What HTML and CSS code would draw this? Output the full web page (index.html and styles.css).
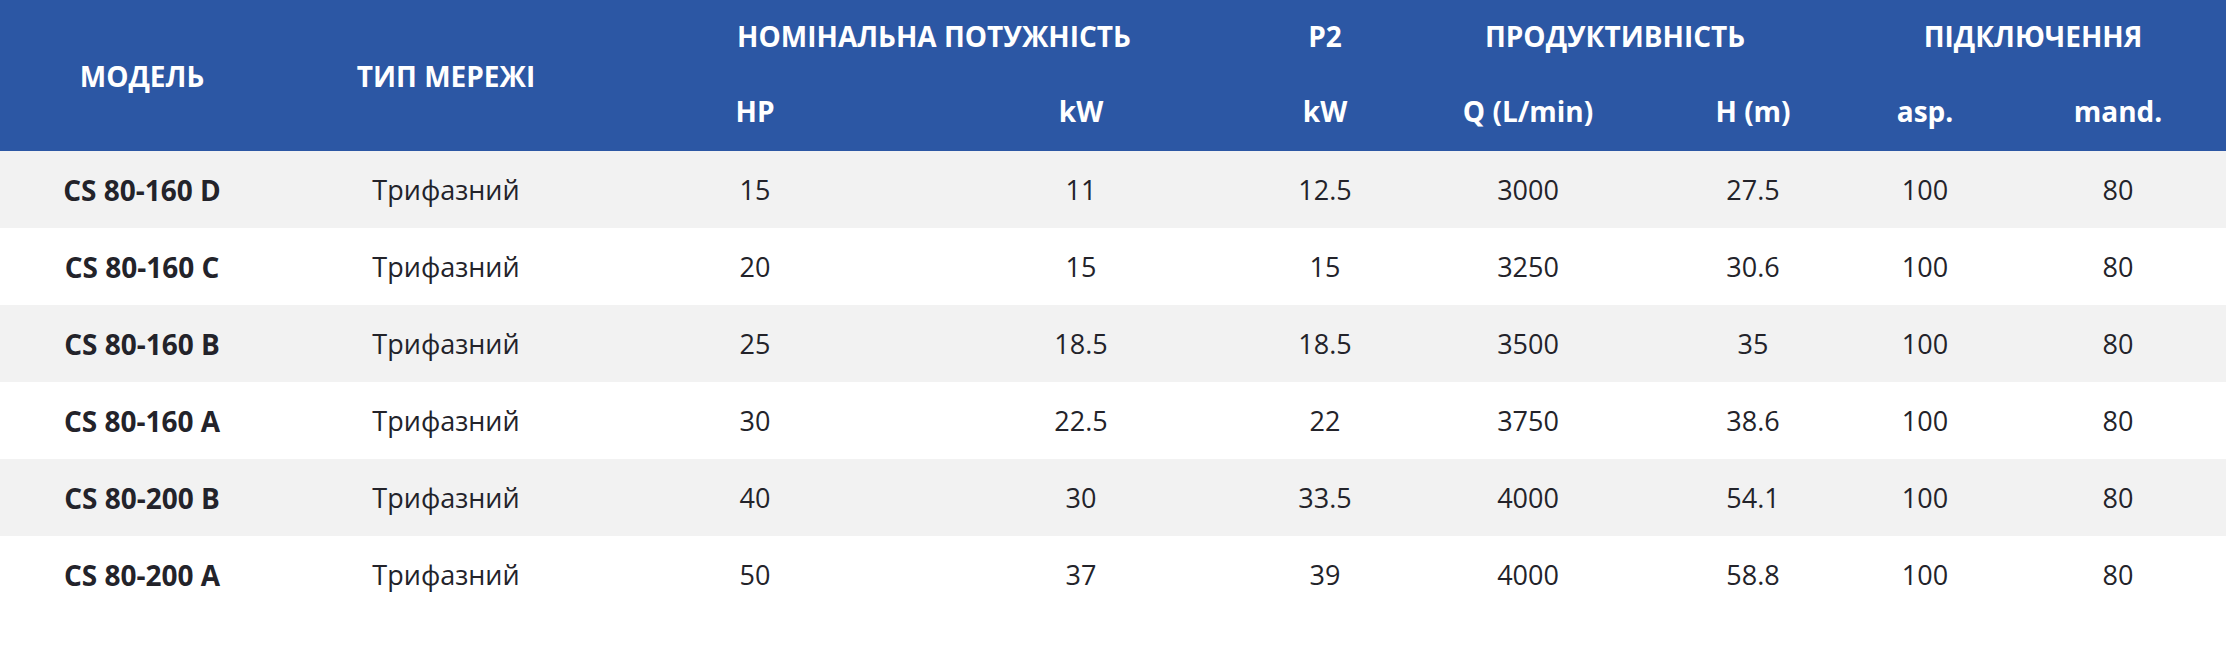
FILE: index.html
```html
<!DOCTYPE html>
<html lang="uk">
<head>
<meta charset="utf-8">
<title>CS 80</title>
<link rel="stylesheet" href="styles.css">
</head>
<body>
<table class="spec">
  <colgroup>
    <col class="c-model"><col class="c-net"><col class="c-hp"><col class="c-kw"><col class="c-p2"><col class="c-q"><col class="c-h"><col class="c-asp"><col class="c-mand">
  </colgroup>
  <thead>
    <tr class="head-top">
      <th rowspan="2">МОДЕЛЬ</th>
      <th rowspan="2">ТИП МЕРЕЖІ</th>
      <th colspan="2">НОМІНАЛЬНА ПОТУЖНІСТЬ</th>
      <th>P2</th>
      <th colspan="2">ПРОДУКТИВНІСТЬ</th>
      <th colspan="2">ПІДКЛЮЧЕННЯ</th>
    </tr>
    <tr class="head-sub">
      <th>HP</th>
      <th>kW</th>
      <th>kW</th>
      <th>Q (L/min)</th>
      <th>H (m)</th>
      <th>asp.</th>
      <th>mand.</th>
    </tr>
  </thead>
  <tbody>
    <tr><td class="model">CS 80-160 D</td><td>Трифазний</td><td>15</td><td>11</td><td>12.5</td><td>3000</td><td>27.5</td><td>100</td><td>80</td></tr>
    <tr><td class="model">CS 80-160 C</td><td>Трифазний</td><td>20</td><td>15</td><td>15</td><td>3250</td><td>30.6</td><td>100</td><td>80</td></tr>
    <tr><td class="model">CS 80-160 B</td><td>Трифазний</td><td>25</td><td>18.5</td><td>18.5</td><td>3500</td><td>35</td><td>100</td><td>80</td></tr>
    <tr><td class="model">CS 80-160 A</td><td>Трифазний</td><td>30</td><td>22.5</td><td>22</td><td>3750</td><td>38.6</td><td>100</td><td>80</td></tr>
    <tr><td class="model">CS 80-200 B</td><td>Трифазний</td><td>40</td><td>30</td><td>33.5</td><td>4000</td><td>54.1</td><td>100</td><td>80</td></tr>
    <tr><td class="model">CS 80-200 A</td><td>Трифазний</td><td>50</td><td>37</td><td>39</td><td>4000</td><td>58.8</td><td>100</td><td>80</td></tr>
  </tbody>
</table>
</body>
</html>
```
FILE: styles.css
```css
html, body {
  margin: 0;
  padding: 0;
  background: #ffffff;
}

body {
  font-family: "Open Sans", "Noto Sans", sans-serif;
  color: #23232a;
}

.spec {
  width: 2226px;
  border-collapse: collapse;
  border-spacing: 0;
  table-layout: fixed;
  font-size: 27px;
}

.c-model { width: 284px; }
.c-net { width: 324px; }
.c-hp { width: 294px; }
.c-kw { width: 358px; }
.c-p2 { width: 130px; }
.c-q { width: 276px; }
.c-h { width: 174px; }
.c-asp { width: 170px; }
.c-mand { width: 216px; }

.spec th,
.spec td {
  padding: 0;
  text-align: center;
  vertical-align: middle;
  white-space: nowrap;
}

.spec thead {
  background: #2c57a4;
  color: #ffffff;
}

.spec th {
  font-size: 28px;
  font-weight: 700;
}

.head-top {
  height: 71px;
}

.head-sub {
  height: 80px;
}

.spec tbody tr {
  height: 77px;
}

.spec tbody tr:nth-child(odd) {
  background: #f2f2f2;
}

.spec td.model {
  font-weight: 700;
  font-size: 28px;
}
```
